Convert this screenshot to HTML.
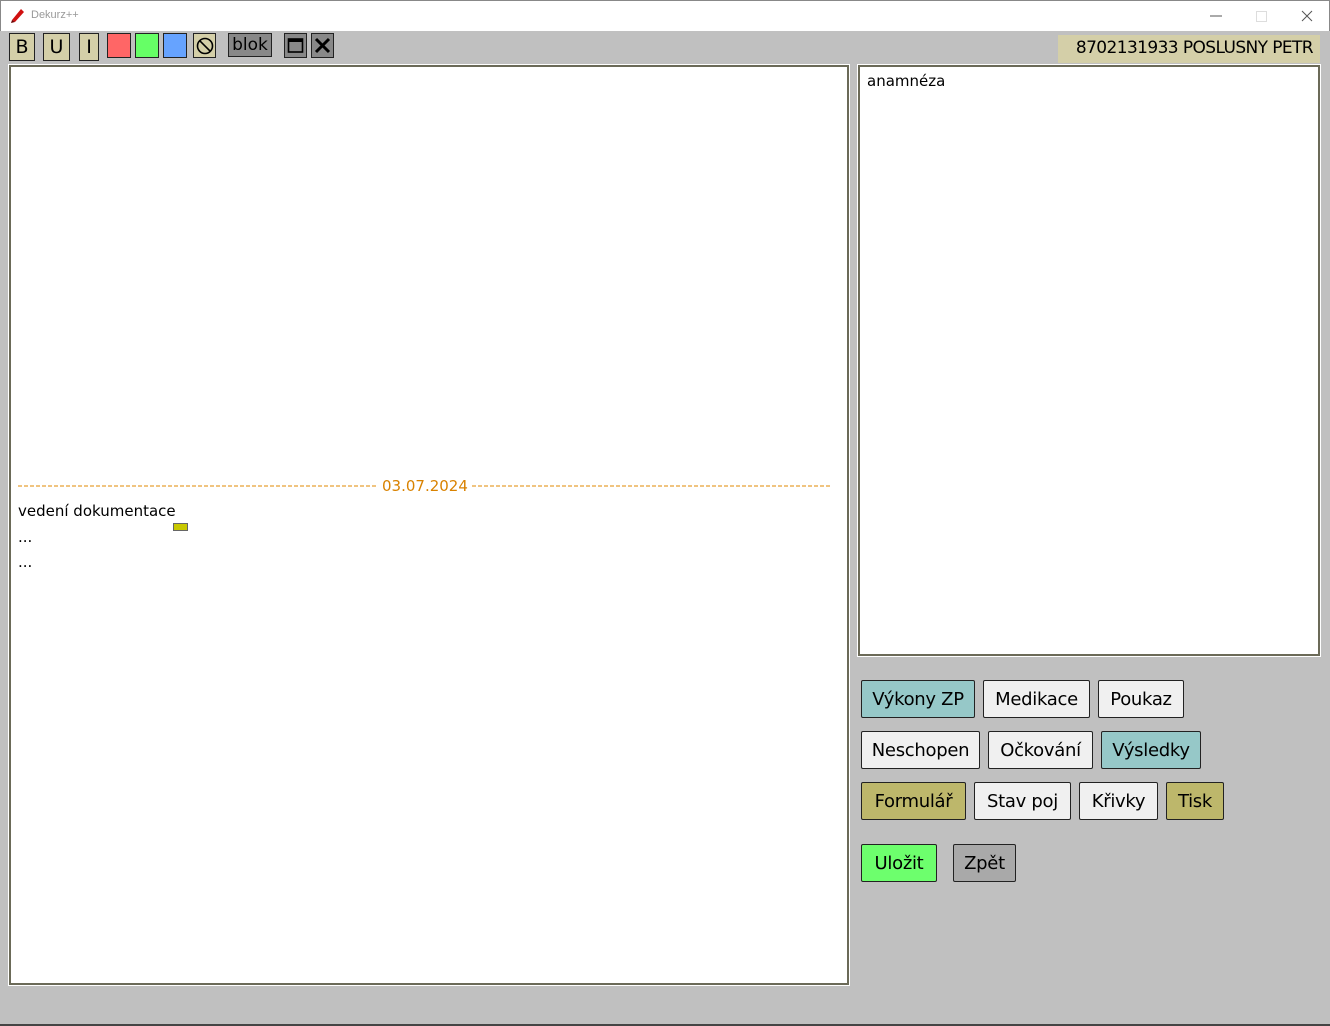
<!DOCTYPE html>
<html><head><meta charset="utf-8"><style>
*{margin:0;padding:0;box-sizing:border-box}
body{width:1330px;height:1026px;background:#c0c0c0;position:relative;overflow:hidden;font-family:"DejaVu Sans","Liberation Sans",sans-serif;color:#000}
.a{position:absolute}
#title{left:0;top:0;width:1330px;height:31px;background:#fff;border:1px solid #888;border-bottom:none}
#title span{position:absolute;left:30px;top:8px;font-size:11px;color:#999;font-family:"Liberation Sans",sans-serif}
.tb{position:absolute;border:1px solid #222;display:flex;align-items:center;justify-content:center;font-size:19px}
.ta{position:absolute;background:#fff;border:2px solid #6b6a58;outline:1px solid #fff}
.btn{position:absolute;height:38px;border:1px solid #222;border-radius:2px;font-size:18px;display:flex;align-items:center;justify-content:center;letter-spacing:-0.3px}
.w{background:#f0f0f0}.t{background:#96c8c8}.o{background:#bdb76b}
</style></head><body>
<div id="title" class="a"><svg class="a" style="left:8px;top:6px" width="17" height="17" viewBox="0 0 17 17"><path d="M3 13 L12 2 L15 5 L6 15 Z" fill="#d01010"/><path d="M3 13 L2 16 L6 15 Z" fill="#600"/></svg><span>Dekurz++</span>
<svg class="a" style="left:1205px;top:8px" width="110" height="14"><line x1="4" y1="7" x2="16" y2="7" stroke="#555"/><rect x="50.5" y="2.5" width="10" height="10" fill="none" stroke="#ddd"/><path d="M96 2 L106 12 M106 2 L96 12" stroke="#555"/></svg></div>

<div class="tb" style="left:9px;top:33px;width:26px;height:28px;background:#d4cfa8">B</div>
<div class="tb" style="left:43px;top:33px;width:27px;height:28px;background:#d4cfa8">U</div>
<div class="tb" style="left:79px;top:33px;width:20px;height:28px;background:#d4cfa8">I</div>
<div class="tb" style="left:107px;top:33px;width:24px;height:25px;background:#ff6666"></div>
<div class="tb" style="left:135px;top:33px;width:24px;height:25px;background:#66ff66"></div>
<div class="tb" style="left:163px;top:33px;width:24px;height:25px;background:#66a3ff"></div>
<div class="tb" style="left:193px;top:33px;width:23px;height:25px;background:#d4cfa8"><svg width="18" height="18"><circle cx="9" cy="9" r="7.5" fill="none" stroke="#000" stroke-width="1.6"/><line x1="3.8" y1="3.8" x2="14.2" y2="14.2" stroke="#000" stroke-width="1.6"/></svg></div>
<div class="tb" style="left:228px;top:33px;width:44px;height:24px;background:#888;font-size:17px">blok</div>
<div class="tb" style="left:284px;top:33px;width:23px;height:25px;background:#888"><svg width="17" height="17"><rect x="1.5" y="2" width="14" height="13" fill="none" stroke="#000" stroke-width="1.6"/><rect x="1.5" y="2" width="14" height="3" fill="#000"/></svg></div>
<div class="tb" style="left:311px;top:33px;width:23px;height:25px;background:#888"><svg width="17" height="17"><path d="M2 2 L15 15 M15 2 L2 15" stroke="#000" stroke-width="3"/></svg></div>

<div class="a" style="left:1058px;top:35px;width:262px;height:28px;background:#d4cfa8;font-size:17px;padding:3px 7px 0 0;letter-spacing:-0.6px;white-space:nowrap;text-align:right">8702131933 POSLUSNY PETR</div>

<div class="ta" style="left:9px;top:65px;width:840px;height:920px"></div>
<svg class="a" style="left:17px;top:478px" width="815" height="16"><line x1="1" y1="8" x2="360" y2="8" stroke="#e08a00" stroke-dasharray="4,2"/><line x1="455" y1="8" x2="814" y2="8" stroke="#e08a00" stroke-dasharray="4,2"/></svg>
<div class="a" style="left:382px;top:477px;font-size:15px;color:#d98200">03.07.2024</div>
<div class="a" style="left:18px;top:502px;font-size:15px">vedení dokumentace</div>
<div class="a" style="left:173px;top:523px;width:15px;height:8px;background:#c8c800;border:1px solid #666"></div>
<div class="a" style="left:18px;top:528px;font-size:15px">...</div>
<div class="a" style="left:18px;top:553px;font-size:15px">...</div>

<div class="ta" style="left:858px;top:65px;width:462px;height:591px"></div>
<div class="a" style="left:867px;top:72px;font-size:15px">anamnéza</div>

<div class="btn t" style="left:861px;top:680px;width:114px">Výkony ZP</div>
<div class="btn w" style="left:983px;top:680px;width:107px">Medikace</div>
<div class="btn w" style="left:1098px;top:680px;width:86px">Poukaz</div>
<div class="btn w" style="left:861px;top:731px;width:119px">Neschopen</div>
<div class="btn w" style="left:988px;top:731px;width:105px">Očkování</div>
<div class="btn t" style="left:1101px;top:731px;width:100px">Výsledky</div>
<div class="btn o" style="left:861px;top:782px;width:105px">Formulář</div>
<div class="btn w" style="left:974px;top:782px;width:97px">Stav poj</div>
<div class="btn w" style="left:1079px;top:782px;width:79px">Křivky</div>
<div class="btn o" style="left:1166px;top:782px;width:58px">Tisk</div>
<div class="btn" style="left:861px;top:844px;width:76px;background:#6dff6d">Uložit</div>
<div class="btn" style="left:953px;top:844px;width:63px;background:#a9a9a9">Zpět</div>
<div class="a" style="left:0;top:1024px;width:1330px;height:2px;background:#444"></div>
</body></html>
